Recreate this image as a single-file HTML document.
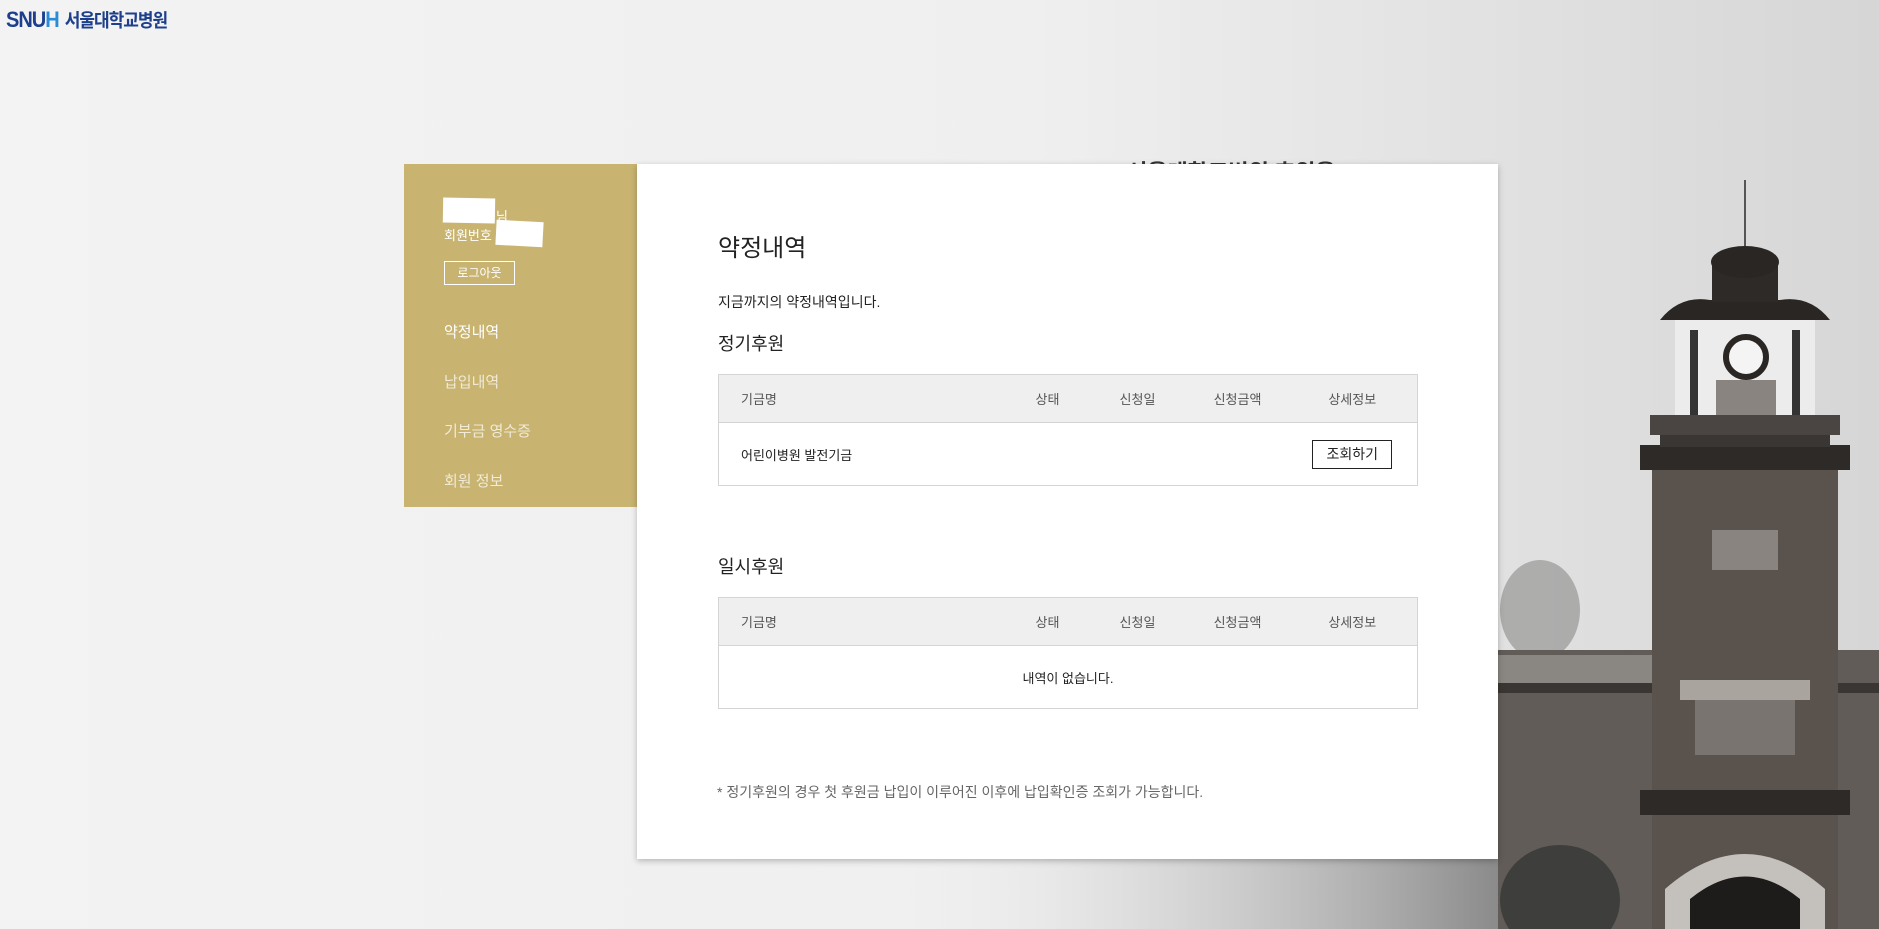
<!DOCTYPE html>
<html><head><meta charset="utf-8"><style>
*{margin:0;padding:0;box-sizing:border-box}
body{width:1879px;height:929px;overflow:hidden;background:#f3f3f3;font-family:"Liberation Sans","Noto Sans CJK KR",sans-serif;position:relative}
.bg{position:absolute;left:0;top:0}
.logo{position:absolute;left:6px;top:5px;font-size:20px;font-weight:bold;color:#1d3f8c;letter-spacing:-1px;transform:scaleY(1.1);transform-origin:left top}
.logo .h{color:#2a8bd6}
.logo .k{font-size:17px;color:#1d3f8c;margin-left:6px;letter-spacing:-1px}
.side{position:absolute;left:404px;top:164px;width:234px;height:343px;background:#c8b470}
.side .w{position:absolute;background:#fff}
.side .t{position:absolute;color:#fff;font-size:13px}
.side .lo{position:absolute;left:40px;top:97px;width:71px;height:24px;border:1px solid #fff;color:#fff;font-size:12px;text-align:center;line-height:22px}
.side .m{position:absolute;left:40px;font-size:15px;color:#f0ead6}
.main{position:absolute;left:637px;top:164px;width:861px;height:695px;background:#fff;box-shadow:0 2px 6px rgba(0,0,0,.25)}
.a{position:absolute;color:#222}
table{position:absolute;left:81px;width:700px;border-collapse:collapse;border:1px solid #d4d4d4;font-size:13px;color:#555}
th{background:#efefef;font-weight:normal;height:48px;border-bottom:1px solid #d4d4d4}
td{height:63px;color:#222}
.btn{display:inline-block;width:80px;height:29px;border:1px solid #222;line-height:27px;text-align:center;font-size:14px;color:#222}
</style></head><body>
<svg class="bg" width="1879" height="929" viewBox="0 0 1879 929">
<defs>
<linearGradient id="g" x1="0" x2="1" y1="0" y2="0"><stop offset="0" stop-color="#f3f3f3"/><stop offset=".55" stop-color="#efefef"/><stop offset="1" stop-color="#d6d6d6"/></linearGradient>
<linearGradient id="gb" x1="0" x2="1" y1="0" y2="0"><stop offset="0" stop-color="#f3f3f3" stop-opacity="0"/><stop offset="1" stop-color="#8a8a8a"/></linearGradient>
</defs>
<rect width="1879" height="929" fill="url(#g)"/>
<rect x="880" y="850" width="620" height="79" fill="url(#gb)"/>
<ellipse cx="1540" cy="610" rx="40" ry="50" fill="#8a8a88" opacity=".6"/>
<rect x="1498" y="650" width="381" height="279" fill="#625c58"/>
<rect x="1498" y="655" width="160" height="28" fill="#8a8682"/>
<rect x="1498" y="683" width="381" height="10" fill="#3a3634"/>
<rect x="1652" y="470" width="186" height="459" fill="#5a524d"/>
<rect x="1640" y="445" width="210" height="25" fill="#2e2a28"/>
<rect x="1660" y="435" width="170" height="12" fill="#3a3634"/>
<rect x="1650" y="415" width="190" height="20" fill="#4a4542"/>
<rect x="1675" y="320" width="140" height="95" fill="#ececec"/>
<rect x="1690" y="330" width="8" height="85" fill="#333"/>
<rect x="1792" y="330" width="8" height="85" fill="#333"/>
<rect x="1716" y="380" width="60" height="35" fill="#8a8480"/>
<path d="M1660 320 q20 -25 50 -20 h70 q30 -5 50 20z" fill="#2a2624"/>
<rect x="1712" y="262" width="66" height="40" fill="#2e2a28"/>
<ellipse cx="1745" cy="262" rx="34" ry="16" fill="#2a2624"/>
<line x1="1745" y1="180" x2="1745" y2="246" stroke="#555" stroke-width="2"/>
<circle cx="1746" cy="357" r="20" fill="#f4f4f4" stroke="#2a2624" stroke-width="6"/>
<rect x="1712" y="530" width="66" height="40" fill="#8a8480"/>
<rect x="1680" y="680" width="130" height="20" fill="#aaa49f"/>
<rect x="1695" y="700" width="100" height="55" fill="#7a7470"/>
<rect x="1640" y="790" width="210" height="25" fill="#2e2a28"/>
<path d="M1665 929 v-40 q80 -70 160 0 v40z" fill="#c4c0bb"/>
<path d="M1690 929 v-30 q55 -45 110 0 v30z" fill="#1e1c1a"/>
<ellipse cx="1560" cy="900" rx="60" ry="55" fill="#3e3e3c"/>
<text x="1127" y="180" font-size="22" font-weight="bold" fill="#333" font-family="Liberation Sans,Noto Sans CJK KR,sans-serif">서울대학교병원 후원을</text>
</svg>
<div class="logo">SNU<span class="h">H</span><span class="k">서울대학교병원</span></div>
<div class="side">
<div class="w" style="left:39px;top:34px;width:52px;height:25px;transform:rotate(1deg)"></div>
<div class="t" style="left:92px;top:42px">님</div>
<div class="t" style="left:40px;top:61px">회원번호</div>
<div class="w" style="left:92px;top:57px;width:47px;height:25px;transform:rotate(3deg)"></div>
<div class="lo">로그아웃</div>
<div class="m" style="top:157px;color:#fff">약정내역</div>
<div class="m" style="top:207px">납입내역</div>
<div class="m" style="top:256px">기부금 영수증</div>
<div class="m" style="top:306px">회원 정보</div>
</div>
<div class="main">
<div class="a" style="left:81px;top:64px;font-size:24px">약정내역</div>
<div class="a" style="left:81px;top:128px;font-size:14px">지금까지의 약정내역입니다.</div>
<div class="a" style="left:81px;top:166px;font-size:18px">정기후원</div>
<table style="top:210px"><tr><th style="text-align:left;padding-left:22px">기금명</th><th style="width:80px">상태</th><th style="width:100px">신청일</th><th style="width:100px">신청금액</th><th style="width:130px">상세정보</th></tr>
<tr><td style="padding-left:22px">어린이병원 발전기금</td><td></td><td></td><td></td><td style="text-align:center"><span class="btn">조회하기</span></td></tr></table>
<div class="a" style="left:81px;top:389px;font-size:18px">일시후원</div>
<table style="top:433px"><tr><th style="text-align:left;padding-left:22px">기금명</th><th style="width:80px">상태</th><th style="width:100px">신청일</th><th style="width:100px">신청금액</th><th style="width:130px">상세정보</th></tr>
<tr><td colspan="5" style="text-align:center">내역이 없습니다.</td></tr></table>
<div class="a" style="left:80px;top:618px;font-size:14px;color:#666">* 정기후원의 경우 첫 후원금 납입이 이루어진 이후에 납입확인증 조회가 가능합니다.</div>
</div>
</body></html>
